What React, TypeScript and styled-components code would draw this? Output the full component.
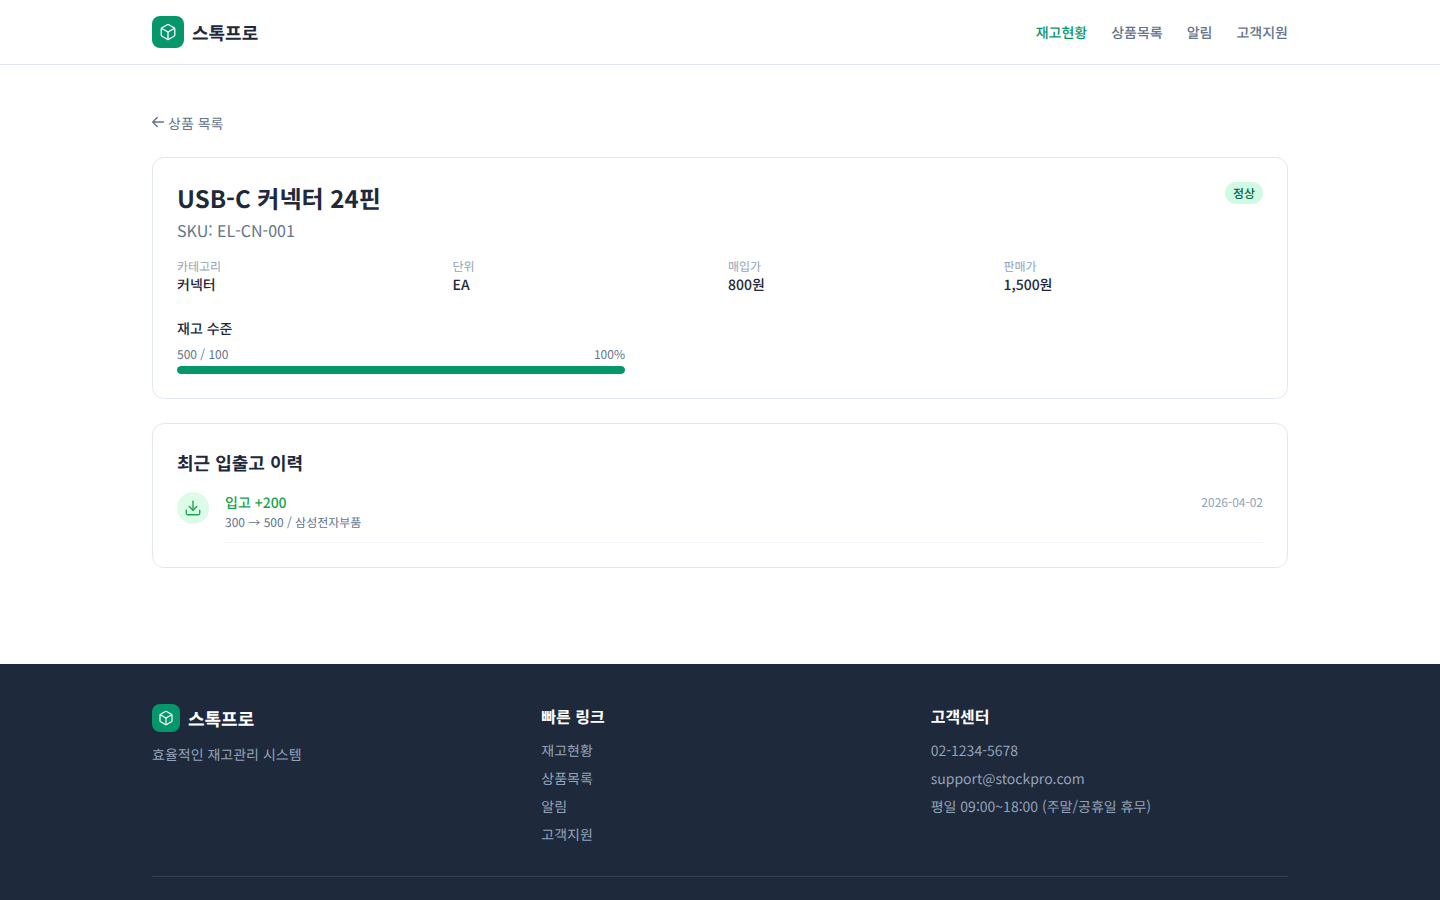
import React from 'react';
import styled, {createGlobalStyle, css} from 'styled-components';
import {Box, Download} from 'lucide-react';

const GlobalStyle = createGlobalStyle`
  * { box-sizing: border-box; }
  body {
    margin: 0;
    background: #fff;
    color: #1e293b;
    font-family: "Noto Sans CJK KR", "Noto Sans", sans-serif;
    text-rendering: geometricPrecision;
  }
  a { text-decoration: none; color: inherit; }
`

// geometricPrecision lifts the baseline of 12/14/18px text by a pixel, put it back
const baselineFix = css`
  padding-top: 1px;
  margin-bottom: -1px;
`

const Container = styled.div`
  width: 1136px;
  margin: 0 auto;
`

const Header = styled.header`
  height: 65px;
  border-bottom: 1px solid #e2e8f0;
  background: #fff;
`

const HeaderInner = styled(Container)`
  height: 64px;
  display: flex;
  align-items: center;
  justify-content: space-between;
`

const Logo = styled.a<{ $footer?: boolean }>`
  display: flex;
  align-items: center;
  gap: 8px;
  color: ${props => props.$footer ? '#fff' : '#1e293b'};
`

const LogoText = styled.span`
  font-size: 18px;
  line-height: 28px;
  font-weight: 700;
  ${baselineFix}
`

const LogoMark = styled.span<{ $size: number }>`
  width: ${props => props.$size}px;
  height: ${props => props.$size}px;
  border-radius: 8px;
  background: #059669;
  color: #fff;
  display: flex;
  align-items: center;
  justify-content: center;
`

const Nav = styled.nav`
  display: flex;
  gap: 24px;
`

const NavLink = styled.a<{ $active?: boolean }>`
  font-size: 14px;
  line-height: 20px;
  font-weight: 500;
  color: ${props => props.$active ? '#059669' : '#64748b'};
  ${baselineFix}
`

const Main = styled(Container)`
  padding: 48px 0 96px;
`

const BackLink = styled.a`
  display: flex;
  align-items: center;
  height: 20px;
  margin-bottom: 24px;
  font-size: 14px;
  line-height: 20px;
  color: #64748b;
`

const BackLabel = styled.span`
  ${baselineFix}
`

const BackArrow = styled.svg`
  width: 16px;
  height: 16px;
  flex: none;
  fill: none;
  stroke: currentColor;
  stroke-width: 1.4;
  stroke-linecap: round;
  stroke-linejoin: round;
`

const Card = styled.section`
  border: 1px solid #e2e8f0;
  border-radius: 12px;
  background: #fff;
  padding: 24px;
  & + & { margin-top: 24px; }
`

const TitleRow = styled.div`
  display: flex;
  justify-content: space-between;
  align-items: flex-start;
  margin-bottom: 16px;
`

const Title = styled.h1`
  margin: 0 0 4px;
  font-size: 24px;
  line-height: 32px;
  font-weight: 700;
  color: #1e293b;
`

const Sku = styled.p`
  margin: 0;
  font-size: 16px;
  line-height: 24px;
  color: #64748b;
`

const Badge = styled.span`
  padding: 3px 8px 1px;
  border-radius: 999px;
  background: #d1fae5;
  color: #065f46;
  font-size: 12px;
  line-height: 18px;
  font-weight: 500;
`

const InfoGrid = styled.div`
  display: grid;
  grid-template-columns: repeat(4, 1fr);
  gap: 16px;
  margin-bottom: 24px;
`

const InfoLabel = styled.div`
  font-size: 12px;
  line-height: 16px;
  color: #94a3b8;
  ${baselineFix}
`

const InfoValue = styled.div`
  font-size: 14px;
  line-height: 20px;
  font-weight: 500;
  color: #1e293b;
  ${baselineFix}
`

const StockTitle = styled.h2`
  margin: 0 0 7px;
  padding-top: 1px;
  font-size: 14px;
  line-height: 20px;
  font-weight: 500;
  color: #1e293b;
`

const StockBlock = styled.div`
  width: 448px;
`

const StockMeta = styled.div`
  display: flex;
  justify-content: space-between;
  margin-bottom: 3px;
  padding-top: 1px;
  font-size: 12px;
  line-height: 16px;
  color: #64748b;
`

const Track = styled.div`
  height: 8px;
  border-radius: 999px;
  background: #e2e8f0;
  overflow: hidden;
`

const Fill = styled.div`
  height: 100%;
  border-radius: 999px;
  background: #059669;
`

const SectionTitle = styled.h2`
  margin: 0 0 15px;
  padding-top: 1px;
  font-size: 18px;
  line-height: 28px;
  font-weight: 700;
  color: #1e293b;
`

const HistoryRow = styled.div`
  display: flex;
  gap: 16px;
`

const HistoryIcon = styled.span`
  width: 32px;
  height: 32px;
  flex: none;
  border-radius: 50%;
  background: #dcfce7;
  color: #16a34a;
  display: flex;
  align-items: center;
  justify-content: center;
`

const HistoryBody = styled.div`
  flex: 1;
  display: flex;
  justify-content: space-between;
  padding-bottom: 12px;
  border-bottom: 1px solid #f1f5f9;
`

const HistoryTitle = styled.div`
  font-size: 14px;
  line-height: 20px;
  font-weight: 500;
  color: #16a34a;
  ${baselineFix}
`

const HistoryDetail = styled.div`
  font-size: 12px;
  line-height: 16px;
  margin-top: 2px;
  padding-top: 1px;
  margin-bottom: -1px;
  color: #64748b;
`

const HistoryDate = styled.div`
  font-size: 12px;
  line-height: 20px;
  color: #94a3b8;
  ${baselineFix}
`

const Footer = styled.footer`
  background: #1e293b;
  padding: 40px 0 32px;
`

const FooterGrid = styled.div`
  display: grid;
  grid-template-columns: repeat(3, 1fr);
  gap: 32px;
  padding-bottom: 32px;
  border-bottom: 1px solid #334155;
`

const Tagline = styled.p`
  margin: 12px 0 -1px;
  padding-top: 1px;
  font-size: 14px;
  line-height: 20px;
  color: #94a3b8;
`

const FooterHeading = styled.h3`
  margin: 0 0 12px;
  font-size: 16px;
  line-height: 24px;
  font-weight: 700;
  color: #fff;
`

const FooterList = styled.ul`
  list-style: none;
  margin: 0;
  padding: 0;
  display: flex;
  flex-direction: column;
  gap: 8px;
`

const FooterItem = styled.li`
  font-size: 14px;
  line-height: 20px;
  color: #94a3b8;
  ${baselineFix}
`

const infos = [
    {label: '카테고리', value: '커넥터'},
    {label: '단위', value: 'EA'},
    {label: '매입가', value: '800원'},
    {label: '판매가', value: '1,500원'},
];

const links = ['재고현황', '상품목록', '알림', '고객지원'];

const App = () => {
    return (
        <div lang="ko">
            <GlobalStyle/>
            <Header>
                <HeaderInner>
                    <Logo>
                        <LogoMark $size={32}><Box size={18} strokeWidth={1.75}/></LogoMark>
                        <LogoText>스톡프로</LogoText>
                    </Logo>
                    <Nav>
                        {links.map((link, i) => <NavLink key={link} $active={i === 0}>{link}</NavLink>)}
                    </Nav>
                </HeaderInner>
            </Header>
            <Main>
                <BackLink>
                    <BackArrow viewBox="0 0 16 16"><path d="M11.5 7H.7M5.2 2.5.7 7l4.5 4.5"/></BackArrow>
                    <BackLabel>상품 목록</BackLabel>
                </BackLink>
                <Card>
                    <TitleRow>
                        <div>
                            <Title>USB-C 커넥터 24핀</Title>
                            <Sku>SKU: EL-CN-001</Sku>
                        </div>
                        <Badge>정상</Badge>
                    </TitleRow>
                    <InfoGrid>
                        {infos.map(info => (
                            <div key={info.label}>
                                <InfoLabel>{info.label}</InfoLabel>
                                <InfoValue>{info.value}</InfoValue>
                            </div>
                        ))}
                    </InfoGrid>
                    <StockTitle>재고 수준</StockTitle>
                    <StockBlock>
                        <StockMeta><span>500 / 100</span><span>100%</span></StockMeta>
                        <Track><Fill style={{width: '100%'}}/></Track>
                    </StockBlock>
                </Card>
                <Card>
                    <SectionTitle>최근 입출고 이력</SectionTitle>
                    <HistoryRow>
                        <HistoryIcon><Download size={18} strokeWidth={1.75}/></HistoryIcon>
                        <HistoryBody>
                            <div>
                                <HistoryTitle>입고 +200</HistoryTitle>
                                <HistoryDetail>300 → 500 / 삼성전자부품</HistoryDetail>
                            </div>
                            <HistoryDate>2026-04-02</HistoryDate>
                        </HistoryBody>
                    </HistoryRow>
                </Card>
            </Main>
            <Footer>
                <Container>
                    <FooterGrid>
                        <div>
                            <Logo $footer>
                                <LogoMark $size={28}><Box size={16} strokeWidth={1.75}/></LogoMark>
                                <LogoText>스톡프로</LogoText>
                            </Logo>
                            <Tagline>효율적인 재고관리 시스템</Tagline>
                        </div>
                        <div>
                            <FooterHeading>빠른 링크</FooterHeading>
                            <FooterList>
                                {links.map(link => <FooterItem key={link}>{link}</FooterItem>)}
                            </FooterList>
                        </div>
                        <div>
                            <FooterHeading>고객센터</FooterHeading>
                            <FooterList>
                                <FooterItem>02-1234-5678</FooterItem>
                                <FooterItem>support@stockpro.com</FooterItem>
                                <FooterItem>평일 09:00~18:00 (주말/공휴일 휴무)</FooterItem>
                            </FooterList>
                        </div>
                    </FooterGrid>
                </Container>
            </Footer>
        </div>
    );
};

export default App;
